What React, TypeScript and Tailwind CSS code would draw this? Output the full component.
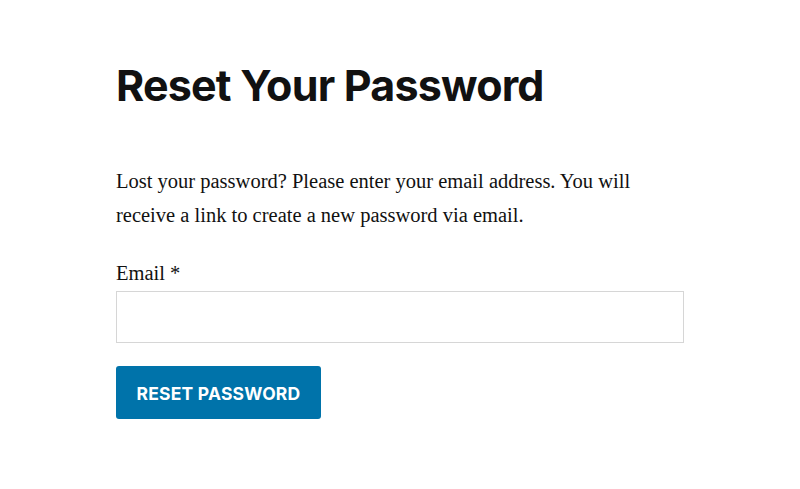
import React from "react";

export default function App() {
  return (
    <div className="w-[800px] h-[489px] bg-white overflow-hidden">
      <div className="pl-[116px] pt-[64px] w-[684px]">
        <h1 className="text-[43px] leading-[43px] font-bold tracking-[-0.8px] text-[#111111]" style={{ fontFamily: "Inter, sans-serif" }}>
          Reset Your Password
        </h1>
        <p className="mt-[57px] w-[568px] text-[20.5px] leading-[34px] text-[#111111]" style={{ fontFamily: "'Liberation Serif', serif" }}>
          Lost your password? Please enter your email address. You will receive a link to create a new password via email.
        </p>
        <form className="mt-[27px]" onSubmit={(e) => e.preventDefault()}>
          <label className="block text-[20.5px] leading-[28px] text-[#111111]" style={{ fontFamily: "'Liberation Serif', serif" }}>
            Email *
          </label>
          <input type="email" className="mt-[4px] block w-[568px] h-[52px] border border-[#d6d6d6] bg-white outline-none" />
          <button type="submit" className="mt-[23px] w-[205px] h-[53px] pt-[3px] rounded-[3px] bg-[#0073aa] text-white text-[17.5px] font-bold uppercase tracking-[0.2px]" style={{ fontFamily: "Inter, sans-serif" }}>
            Reset Password
          </button>
        </form>
      </div>
    </div>
  );
}
